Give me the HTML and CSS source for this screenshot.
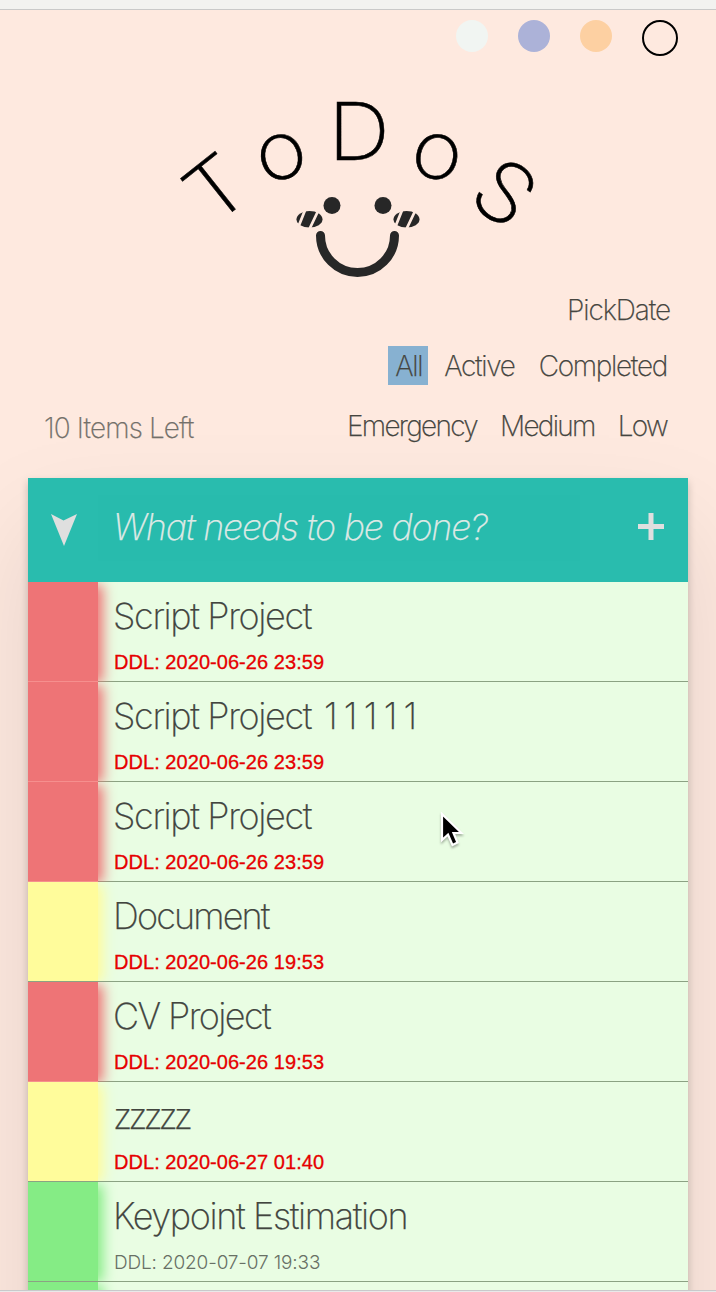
FILE: index.html
```html
<!DOCTYPE html>
<html lang="en">
<head>
<meta charset="utf-8">
<title>ToDos</title>
<link rel="stylesheet" href="styles.css">
</head>
<body>
<div class="topbar"></div>
<main class="app">
  <div class="themes">
    <span class="dot mint"></span><span class="dot violet"></span><span class="dot orange"></span><span class="dot current"></span>
  </div>
  <svg class="logo" viewBox="0 0 400 200" width="400" height="200">
    <g class="letters">
      <text transform="translate(74 130.500) rotate(-38.500) scale(1.080 1)">T</text>
      <text transform="translate(126.500 98) rotate(-13) scale(1.08 1)">o</text>
      <text transform="translate(199 80) scale(1.080 1)">D</text>
      <text transform="translate(272 98) rotate(13) scale(1.080 1)">o</text>
      <text transform="translate(327 136.500) rotate(37) scale(1.080 1.040)">S</text>
    </g>
    <circle cx="172" cy="125.500" r="8.500" fill="#272727"/>
    <circle cx="223" cy="125.500" r="8.500" fill="#272727"/>
    <path class="mouth" d="M160.500 155.500A37 37 0 0 0 234.500 155.500"/>
    <g id="cheek">
      <ellipse class="cheek" cx="149.500" cy="139.300" rx="13" ry="8.300"/>
      <path class="stripes" d="M145.500 129L137.500 149M159 129L149.500 149"/>
    </g>
    <use href="#cheek" x="97"/>
  </svg>
  <div class="pick"><span>PickDate</span></div>
  <nav class="filters states">
    <span class="tab selected">All</span><span class="tab">Active</span><span class="tab">Completed</span>
  </nav>
  <div class="status">
    <span class="count">10 Items Left</span>
    <nav class="filters priorities"><span class="tab">Emergency</span><span class="tab">Medium</span><span class="tab">Low</span></nav>
  </div>
  <section class="card">
    <header class="entry">
      <svg class="arrow" viewBox="0 0 26 33" width="26" height="33"><path d="M0 1L12.500 7.500L26 1L13 33Z"/></svg>
      <div class="input"><span>What needs to be done?</span></div>
      <svg class="plus" viewBox="0 0 26 27" width="26" height="27"><path d="M0 13.500H26M13 0V27"/></svg>
    </header>
    <ul class="list">
      <li class="item red"><i class="level"></i><div class="body"><h2>Script Project</h2><p class="late">DDL: 2020-06-26 23:59</p></div></li>
      <li class="item red"><i class="level"></i><div class="body"><h2>Script Project <span class="ones">11111</span></h2><p class="late">DDL: 2020-06-26 23:59</p></div></li>
      <li class="item red"><i class="level"></i><div class="body"><h2>Script Project</h2><p class="late">DDL: 2020-06-26 23:59</p></div></li>
      <li class="item yellow"><i class="level"></i><div class="body"><h2 class="tight">Document</h2><p class="late">DDL: 2020-06-26 19:53</p></div></li>
      <li class="item red"><i class="level"></i><div class="body"><h2 class="snug">CV Project</h2><p class="late">DDL: 2020-06-26 19:53</p></div></li>
      <li class="item yellow"><i class="level"></i><div class="body"><h2 class="dense">zzzzz</h2><p class="late">DDL: 2020-06-27 01:40</p></div></li>
      <li class="item green"><i class="level"></i><div class="body"><h2>Keypoint Estimation</h2><p>DDL: 2020-07-07 19:33</p></div></li>
      <li class="item green"><i class="level"></i><div class="body"></div></li>
    </ul>
  </section>
</main>
<div class="bottombar"></div>
<svg class="cursor" viewBox="0 0 24 38" width="24" height="38"><path d="M2 2V28L8 22.500L12.500 33L17.500 30.500L13.500 21H21.500Z"/></svg>
</body>
</html>
```
FILE: styles.css
```css
* { box-sizing: border-box; }
body {
  margin: 0;
  height: 1292px;
  overflow: hidden;
  display: flex;
  flex-direction: column;
  background: #fee9df;
  color: #454540;
  font-family: Inter, "Liberation Sans", sans-serif;
  font-weight: 200;
  -webkit-text-stroke-width: .25px;
}
.topbar { height: 10px; flex: none; background: #f2f2f0; border-bottom: 1px solid #c9c9c9; }
.bottombar { height: 2px; flex: none; background: #e9e9e9; border-top: 1px solid #c9c9cb; }
.app { flex: 1; min-height: 0; overflow: hidden; }
.themes { display: flex; justify-content: flex-end; gap: 30px; padding: 10px 38px 0 0; height: 70px; }
.dot { width: 32px; height: 32px; border-radius: 50%; }
.mint { background: #f1f5f2; }
.violet { background: #acb2d8; }
.orange { background: #fdd0a2; }
.current { width: 36px; height: 36px; border: 2px solid #000; }
.logo { display: block; margin-left: 160px; overflow: visible; }
.letters { font-size: 80px; text-anchor: middle; fill: #000; stroke: #000; stroke-width: .5; }
.mouth { fill: none; stroke: #272727; stroke-width: 9; stroke-linecap: round; }
.cheek { fill: #272727; }
.stripes { fill: none; stroke: #fee9df; stroke-width: 2.800; }
.pick { height: 60px; padding: 10px 46px 0 0; text-align: right; font-size: 28px; line-height: 40px; letter-spacing: -1.100px; }
.filters { display: flex; gap: 9px; font-size: 28px; line-height: 41px; letter-spacing: -1.300px; white-space: nowrap; }
.tab { padding: 0 8px 0 7px; height: 39px; }
.states { justify-content: flex-end; padding: 6px 41px 0 0; height: 66px; }
.selected { background: #87b1d1; width: 40px; }
.priorities { letter-spacing: -1.700px; gap: 8px; }
.status { display: flex; justify-content: space-between; height: 72px; padding: 0 41px 0 44px; }
.count { font-size: 28px; line-height: 45px; letter-spacing: -.9px; color: #73706a; white-space: nowrap; }
.card {
  margin: 0 28px;
  background: #e9fde3;
  box-shadow: 0 4px 8px rgba(0,0,0,.2), 0 50px 100px rgba(0,0,0,.1);
}
.entry { display: flex; align-items: flex-start; height: 104px; background: #29bcae; padding: 17px 23px 0 22px; }
.arrow { margin: 18px 21px 0 1px; fill: #dfdfdf; }
.input { width: 482px; height: 66px; padding-left: 15px; background: #28bbad; font-size: 36px; font-style: italic; line-height: 65px; letter-spacing: -1.250px; color: #dde9e5; white-space: nowrap; }
.plus { margin: 18px 1px 0 auto; fill: none; stroke: #dfdfdf; stroke-width: 5; }
.list { margin: 0; padding: 0; list-style: none; }
.item { display: flex; height: 100px; border-bottom: 1px solid #8ba283; }
.level { width: 70px; height: 99px; flex: none; background: var(--c); box-shadow: 6px 2px 12px -1px var(--c); clip-path: inset(0 -20px 0 0); }
.red { --c: #ee7476; }
.yellow { --c: #fffc9b; }
.green { --c: #85ec85; }
.red .level { height: 100px; border-bottom: 1px solid #f68f8e; }
.body { padding: 11px 0 0 15px; white-space: nowrap; }
h2 { margin: 0; font-size: 36px; line-height: 47px; font-weight: 200; letter-spacing: -1.350px; color: #42453f; }
.snug { letter-spacing: -1.600px; }
.tight { letter-spacing: -1.850px; }
.dense { letter-spacing: -4px; }
.ones { margin-left: 4px; letter-spacing: 6.200px; }
.body p { margin: 10px 0 0 1px; font: 300 19px/26px Inter, sans-serif; letter-spacing: -.150px; color: #687065; -webkit-text-stroke: 0; }
.body .late { margin-top: 9px; font: 20px/26px "Liberation Sans", sans-serif; letter-spacing: .050px; color: #e60000; -webkit-text-stroke: .3px #e60000; }
.cursor { position: absolute; left: 440px; top: 812px; fill: #000; stroke: #fff; stroke-width: 2.200; filter: drop-shadow(0 2px 1px rgba(0,0,0,.3)); }
```
